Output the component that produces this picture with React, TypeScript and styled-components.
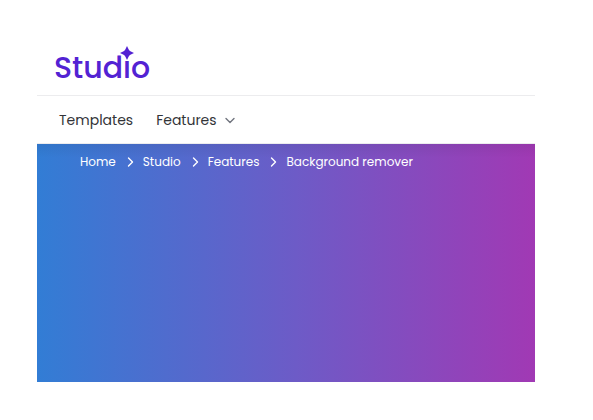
import React from "react";
import styled, { createGlobalStyle } from "styled-components";

const GlobalStyle = createGlobalStyle`
  *, *::before, *::after { box-sizing: border-box; }
  body {
    margin: 0;
    background: #ffffff;
    font-family: Poppins, Inter, "Open Sans", sans-serif;
  }
`;

const Page = styled.div`
  display: flex;
  flex-direction: column;
  min-height: 100vh;
  padding: 38px 58px 38px 37px;
`;

const Header = styled.header`
  display: flex;
  align-items: center;
  height: 58px;
  padding: 2px 17px 0;
  border-bottom: 1px solid #ececee;
`;

const Logo = styled.a`
  position: relative;
  color: #5322d3;
  font-size: 30px;
  font-weight: 500;
  line-height: 40px;
  text-decoration: none;
`;

const Spark = styled.svg`
  position: absolute;
  top: -2px;
  right: 16px;
  width: 14px;
  height: 14px;
  fill: currentColor;
`;

const Nav = styled.nav`
  display: flex;
  align-items: center;
  gap: 23px;
  height: 48px;
  padding: 0 22px;
  border-bottom: 1px solid #ececee;
  color: #333438;
  font-size: 14px;
  line-height: 24px;
`;

const NavLink = styled.a`
  color: inherit;
  text-decoration: none;
`;

const NavButton = styled.button`
  display: flex;
  align-items: center;
  gap: 8px;
  padding: 0;
  border: 0;
  background: none;
  color: inherit;
  font: inherit;
`;

const Arrow = styled.svg<{ $color: string }>`
  display: block;
  flex: none;
  fill: none;
  stroke: ${({ $color }) => $color};
  stroke-width: 1.4;
  stroke-linecap: round;
  stroke-linejoin: round;
`;

const Hero = styled.main`
  flex: 1;
  padding: 8px 43px;
  background:
    linear-gradient(rgba(0, 0, 0, 0.06), rgba(0, 0, 0, 0) 14px),
    linear-gradient(90deg, #327dd5, #6d5bc7 52%, #a139b4);
`;

const Crumbs = styled.ol`
  display: flex;
  align-items: center;
  gap: 9px;
  margin: 0;
  padding: 0;
  list-style: none;
  color: #ffffff;
  font-size: 12px;
  line-height: 20px;
`;

const Crumb = styled.li`
  display: flex;
  align-items: center;
  gap: 11px;
  white-space: nowrap;
`;

const trail = ["Home", "Studio", "Features"];

export default function App() {
  return (
    <>
      <GlobalStyle />
      <Page>
        <Header>
          <Logo href="#" aria-label="Studio">
            Studıo
            <Spark viewBox="0 0 14 14" aria-hidden="true">
              <path d="M7 0 L8.7 3.6 Q9.2 4.8 10.4 5.3 L14 7 L10.4 8.7 Q9.2 9.2 8.7 10.4 L7 14 L5.3 10.4 Q4.8 9.2 3.6 8.7 L0 7 L3.6 5.3 Q4.8 4.8 5.3 3.6Z" />
            </Spark>
          </Logo>
        </Header>
        <Nav aria-label="Main">
          <NavLink href="#templates">Templates</NavLink>
          <NavButton type="button">
            Features
            <Arrow $color="#70747e" width="10" height="10" viewBox="0 0 10 10" aria-hidden="true">
              <path d="M1 3.5 L5 7.5 L9 3.5" />
            </Arrow>
          </NavButton>
        </Nav>
        <Hero>
          <nav aria-label="Breadcrumb">
            <Crumbs>
              {trail.map((name) => (
                <Crumb key={name}>
                  <NavLink href="#">{name}</NavLink>
                  <Arrow $color="#ffffff" width="7" height="10" viewBox="0 0 7 10" aria-hidden="true">
                    <path d="M1.5 1 L5.5 5 L1.5 9" />
                  </Arrow>
                </Crumb>
              ))}
              <Crumb aria-current="page">Background remover</Crumb>
            </Crumbs>
          </nav>
        </Hero>
      </Page>
    </>
  );
}
